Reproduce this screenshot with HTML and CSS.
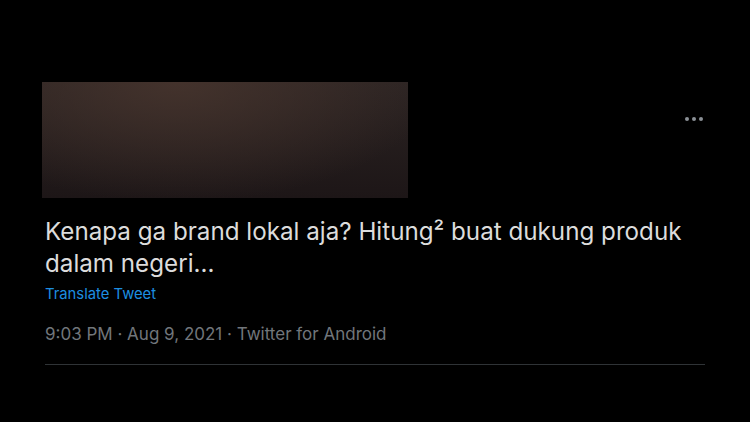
FILE: index.html
```html
<!DOCTYPE html>
<html lang="en">
<head>
    <meta charset="UTF-8">
    <title>Tweet</title>
    <link rel="stylesheet" href="styles.css">
</head>
<body>
    <div class="tweet">
        <div class="media-row">
            <div class="media"></div>
            <div class="more">
                <span class="dot"></span><span class="dot"></span><span class="dot"></span>
            </div>
        </div>
        <p class="tweet-text">Kenapa ga brand lokal aja? Hitung² buat dukung produk dalam negeri...</p>
        <a class="translate">Translate Tweet</a>
        <div class="meta">9:03 PM · Aug 9, 2021 · Twitter for Android</div>
        <div class="divider"></div>
    </div>
</body>
</html>
```

FILE: styles.css
```css
body {
    margin: 0;
    padding: 0;
    background-color: #000;
    font-family: Inter, Roboto, sans-serif;
    overflow: hidden;
}
.tweet {
    width: 750px;
    height: 422px;
    padding: 82px 45px 0 45px;
    box-sizing: border-box;
}
.media-row {
    display: flex;
    justify-content: space-between;
    align-items: flex-start;
}
.media {
    width: 366px;
    height: 116px;
    margin-left: -3px;
    background:
        radial-gradient(ellipse 260px 120px at 135px 0, rgba(70, 52, 45, 0.9), rgba(0, 0, 0, 0) 100%),
        linear-gradient(to bottom, #2c2423, #1d1617);
}
.more {
    display: flex;
    gap: 3px;
    margin-top: 35px;
    margin-right: 2px;
}
.dot {
    width: 4px;
    height: 4px;
    border-radius: 50%;
    background-color: #8b9096;
}
.tweet-text {
    margin: 18px 0 0 0;
    color: #dcdcdc;
    font-size: 24.2px;
    line-height: 32px;
    width: 660px;
}
.translate {
    display: block;
    margin-top: 5px;
    color: #1d8fe0;
    font-size: 14.8px;
    line-height: 18px;
}
.meta {
    margin-top: 21px;
    color: #71767b;
    font-size: 17px;
    line-height: 20px;
}
.divider {
    margin-top: 20px;
    height: 1px;
    background-color: #2f3336;
}
```
